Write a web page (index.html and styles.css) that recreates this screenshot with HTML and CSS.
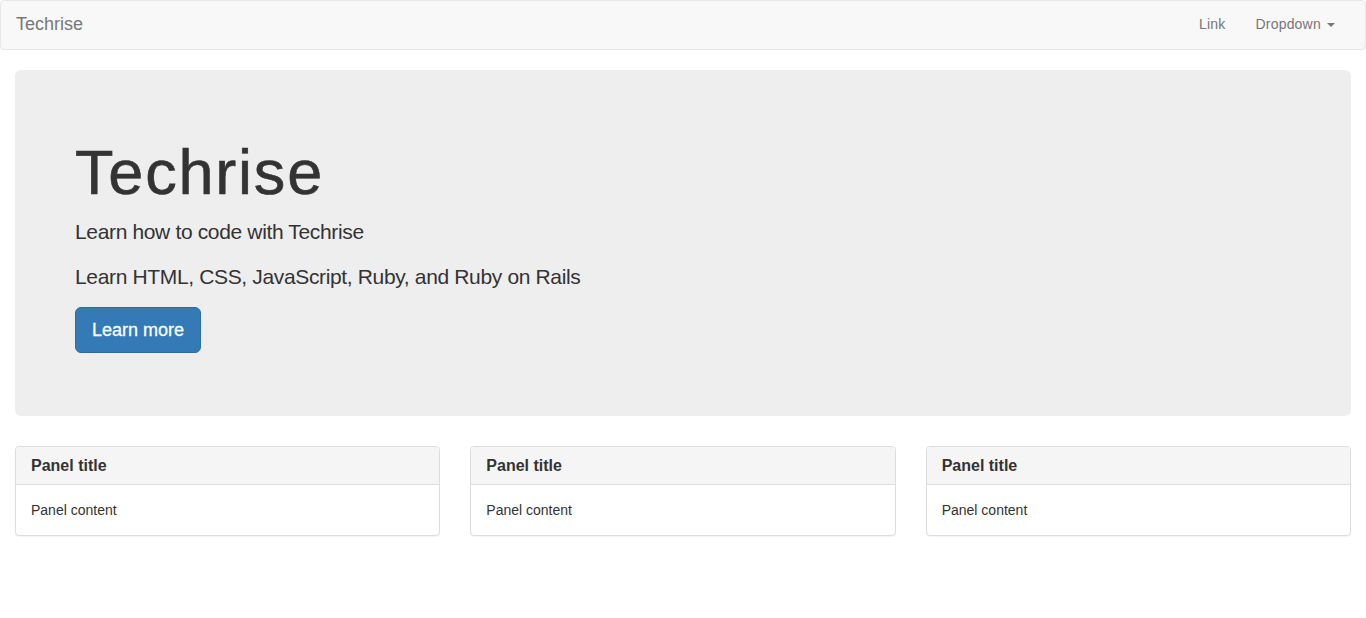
FILE: index.html
```html
<!DOCTYPE html>
<html>
<head>
<meta charset="utf-8">
<title>Techrise</title>
<link rel="stylesheet" href="styles.css">
</head>
<body>
<nav class="navbar">
  <div class="navbar-inner">
    <a class="brand" href="#">Techrise</a>
    <ul class="nav-right">
      <li><a href="#">Link</a></li>
      <li><a href="#">Dropdown <span class="caret"></span></a></li>
    </ul>
  </div>
</nav>
<div class="container">
  <div class="jumbotron">
    <h1>Techrise</h1>
    <p>Learn how to code with Techrise</p>
    <p>Learn HTML, CSS, JavaScript, Ruby, and Ruby on Rails</p>
    <p><a class="btn" href="#">Learn more</a></p>
  </div>
  <div class="row">
    <div class="col">
      <div class="panel">
        <div class="panel-heading"><h3 class="panel-title">Panel title</h3></div>
        <div class="panel-body">Panel content</div>
      </div>
    </div>
    <div class="col">
      <div class="panel">
        <div class="panel-heading"><h3 class="panel-title">Panel title</h3></div>
        <div class="panel-body">Panel content</div>
      </div>
    </div>
    <div class="col">
      <div class="panel">
        <div class="panel-heading"><h3 class="panel-title">Panel title</h3></div>
        <div class="panel-body">Panel content</div>
      </div>
    </div>
  </div>
</div>
</body>
</html>
```
FILE: styles.css
```css
* { box-sizing: border-box; }
html, body { margin: 0; padding: 0; }
body {
  font-family: "Liberation Sans", Arial, sans-serif;
  font-size: 14px;
  line-height: 1.42857143;
  color: #333;
  background: #fff;
}
a { text-decoration: none; }

.navbar {
  height: 50px;
  margin-bottom: 20px;
  background: #f8f8f8;
  border: 1px solid #e7e7e7;
  border-radius: 4px;
}
.navbar-inner {
  display: flex;
  justify-content: space-between;
  align-items: flex-start;
  padding: 0 15px;
}
.brand {
  display: block;
  padding: 13px 0;
  font-size: 18px;
  line-height: 20px;
  color: #777;
}
.nav-right {
  display: flex;
  list-style: none;
  margin: 0;
  padding: 0;
}
.nav-right a {
  display: block;
  padding: 13px 15px;
  line-height: 20px;
  color: #777;
  letter-spacing: 0.2px;
}
.caret {
  display: inline-block;
  width: 0;
  height: 0;
  margin-left: 2px;
  vertical-align: middle;
  border-top: 4px solid #777;
  border-left: 4px solid transparent;
  border-right: 4px solid transparent;
}

.container {
  padding: 0 15px;
}
.jumbotron {
  padding: 48px 60px;
  margin-bottom: 30px;
  background: #eee;
  border-radius: 6px;
}
.jumbotron h1 {
  margin: 0 0 10px;
  padding-top: 20px;
  font-size: 63px;
  font-weight: 500;
  line-height: 1.1;
  letter-spacing: 1.8px;
  color: #333;
  -webkit-text-stroke: 0.6px #333;
}
.jumbotron p {
  margin: 0 0 15px;
  font-size: 21px;
  font-weight: 200;
  line-height: 30px;
  letter-spacing: -0.35px;
}
.btn {
  display: inline-block;
  padding: 10px 16px;
  font-size: 18px;
  line-height: 1.3333333;
  color: #fff;
  background: #337ab7;
  border: 1px solid #2e6da4;
  border-radius: 6px;
  vertical-align: top;
  letter-spacing: 0;
  -webkit-text-stroke: 0.3px #fff;
}

.row {
  display: flex;
  margin: 0 -15px;
}
.col {
  flex: 1 1 0;
  padding: 0 15px;
}
.panel {
  margin-bottom: 20px;
  background: #fff;
  border: 1px solid #ddd;
  border-radius: 4px;
  box-shadow: 0 1px 1px rgba(0,0,0,.05);
}
.panel-heading {
  padding: 10px 15px;
  background: #f5f5f5;
  border-bottom: 1px solid #ddd;
  border-radius: 3px 3px 0 0;
}
.panel-title {
  margin: 0;
  font-size: 16px;
  line-height: 17px;
  color: #333;
  font-weight: bold;
}
.panel-body {
  padding: 15px;
}
```
